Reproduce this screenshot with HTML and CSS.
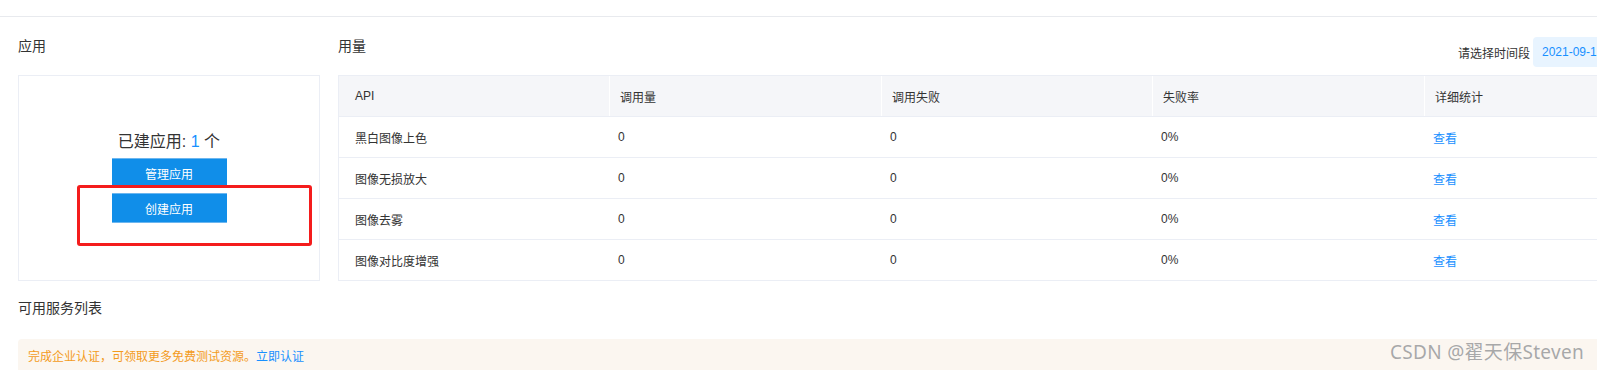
FILE: index.html
```html
<!DOCTYPE html>
<html lang="zh-CN">
<head>
<meta charset="utf-8">
<title>应用</title>
<link rel="stylesheet" href="styles.css">
</head>
<body>
<div class="topbar"></div>
<main class="main">
  <div class="cols">
    <section class="col-app">
      <div class="title-row"><h2 class="title">应用</h2></div>
      <div class="app-card">
        <p class="app-count">已建应用: <span class="num">1</span> 个</p>
        <button class="btn">管理应用</button>
        <button class="btn">创建应用</button>
      </div>
    </section>
    <section class="col-usage">
      <div class="title-row">
        <h2 class="title">用量</h2>
        <div class="range">
          <span class="range-label">请选择时间段</span>
          <div class="range-box">2021-09-13 ~ 2021-09-20</div>
        </div>
      </div>
      <div class="table">
        <div class="tr th">
          <div class="td">API</div><div class="td">调用量</div><div class="td">调用失败</div><div class="td">失败率</div><div class="td">详细统计</div>
        </div>
        <div class="tr">
          <div class="td">黑白图像上色</div><div class="td">0</div><div class="td">0</div><div class="td">0%</div><div class="td"><a class="link">查看</a></div>
        </div>
        <div class="tr">
          <div class="td">图像无损放大</div><div class="td">0</div><div class="td">0</div><div class="td">0%</div><div class="td"><a class="link">查看</a></div>
        </div>
        <div class="tr">
          <div class="td">图像去雾</div><div class="td">0</div><div class="td">0</div><div class="td">0%</div><div class="td"><a class="link">查看</a></div>
        </div>
        <div class="tr">
          <div class="td">图像对比度增强</div><div class="td">0</div><div class="td">0</div><div class="td">0%</div><div class="td"><a class="link">查看</a></div>
        </div>
      </div>
    </section>
  </div>
  <h2 class="title svc-title">可用服务列表</h2>
  <div class="notice">完成企业认证，可领取更多免费测试资源。<a class="link">立即认证</a></div>
</main>
<div class="annot"></div>
<div class="watermark">CSDN @翟天保Steven</div>
</body>
</html>
```
FILE: styles.css
```css
html, body {
  margin: 0;
  padding: 0;
  overflow: hidden;
  background: #fff;
}
body {
  position: relative;
  width: 1597px;
  height: 370px;
  font-family: "Liberation Sans", "Noto Sans CJK SC", sans-serif;
  color: #333;
}
.topbar {
  height: 16px;
  border-bottom: 1px solid #e8eaee;
}
.main {
  width: 1678px;
  padding: 20px 0 0 18px;
}
.cols {
  display: flex;
  gap: 18px;
}
.col-app {
  width: 302px;
  flex: none;
}
.col-usage {
  width: 1358px;
  flex: none;
}
.title-row {
  height: 30px;
  margin-bottom: 8px;
  display: flex;
  justify-content: space-between;
  align-items: flex-start;
}
.title {
  margin: 0;
  font-size: 14px;
  line-height: 18px;
  font-weight: normal;
  color: #333;
}
.range {
  display: flex;
  align-items: center;
  height: 30px;
}
.range-label {
  font-size: 12px;
  color: #333;
  margin-right: 3px;
}
.range-box {
  width: 154px;
  height: 30px;
  line-height: 30px;
  padding-left: 9px;
  background: #e8f4ff;
  border-radius: 4px;
  color: #1890ff;
  font-size: 12px;
  white-space: nowrap;
  overflow: hidden;
}
.app-card {
  box-sizing: border-box;
  height: 206px;
  border: 1px solid #ebeef5;
  padding-top: 55px;
  display: flex;
  flex-direction: column;
  align-items: center;
}
.app-count {
  margin: 0 0 5px;
  font-size: 16px;
  line-height: 22px;
  color: #333;
}
.num { color: #1890ff; }
.btn {
  width: 115px;
  height: 30px;
  margin: 0 0 5px;
  padding: 0;
  border: none;
  border-top: 1px solid #6cb6ef;
  border-bottom: 1px solid #6cb6ef;
  background: #108ee9;
  color: #fff;
  font-family: inherit;
  font-size: 12px;
}
.table {
  border-top: 1px solid #ebeef5;
  border-left: 1px solid #ebeef5;
}
.tr {
  display: grid;
  grid-template-columns: 270px 272px 271px 272px 272px;
  height: 40px;
  border-bottom: 1px solid #ebeef5;
  font-size: 12px;
}
.th {
  background: #f5f6f9;
}
.td {
  display: flex;
  align-items: center;
  padding-left: 9px;
}
.td:first-child { padding-left: 16px; }
.th .td + .td { border-left: 1px solid #fff; padding-left: 10px; }
.link {
  color: #1890ff;
  text-decoration: none;
}
.svc-title {
  margin-top: 18px;
  margin-bottom: 22px;
}
.notice {
  background: #fbf6f0;
  border-radius: 4px;
  padding: 10px;
  font-size: 12px;
  line-height: 16px;
  color: #f39b1c;
}
.annot {
  position: absolute;
  left: 77px;
  top: 185px;
  width: 229px;
  height: 55px;
  border: 3px solid #f41c1c;
  border-radius: 3px;
}
.watermark {
  position: absolute;
  left: 1390px;
  top: 339px;
  font-family: "Noto Sans", "Noto Sans CJK SC", sans-serif;
  font-size: 19px;
  line-height: 26px;
  letter-spacing: 0.3px;
  color: #a8a8a8;
  text-shadow: 0 0 1px #fff;
  white-space: nowrap;
}
```
